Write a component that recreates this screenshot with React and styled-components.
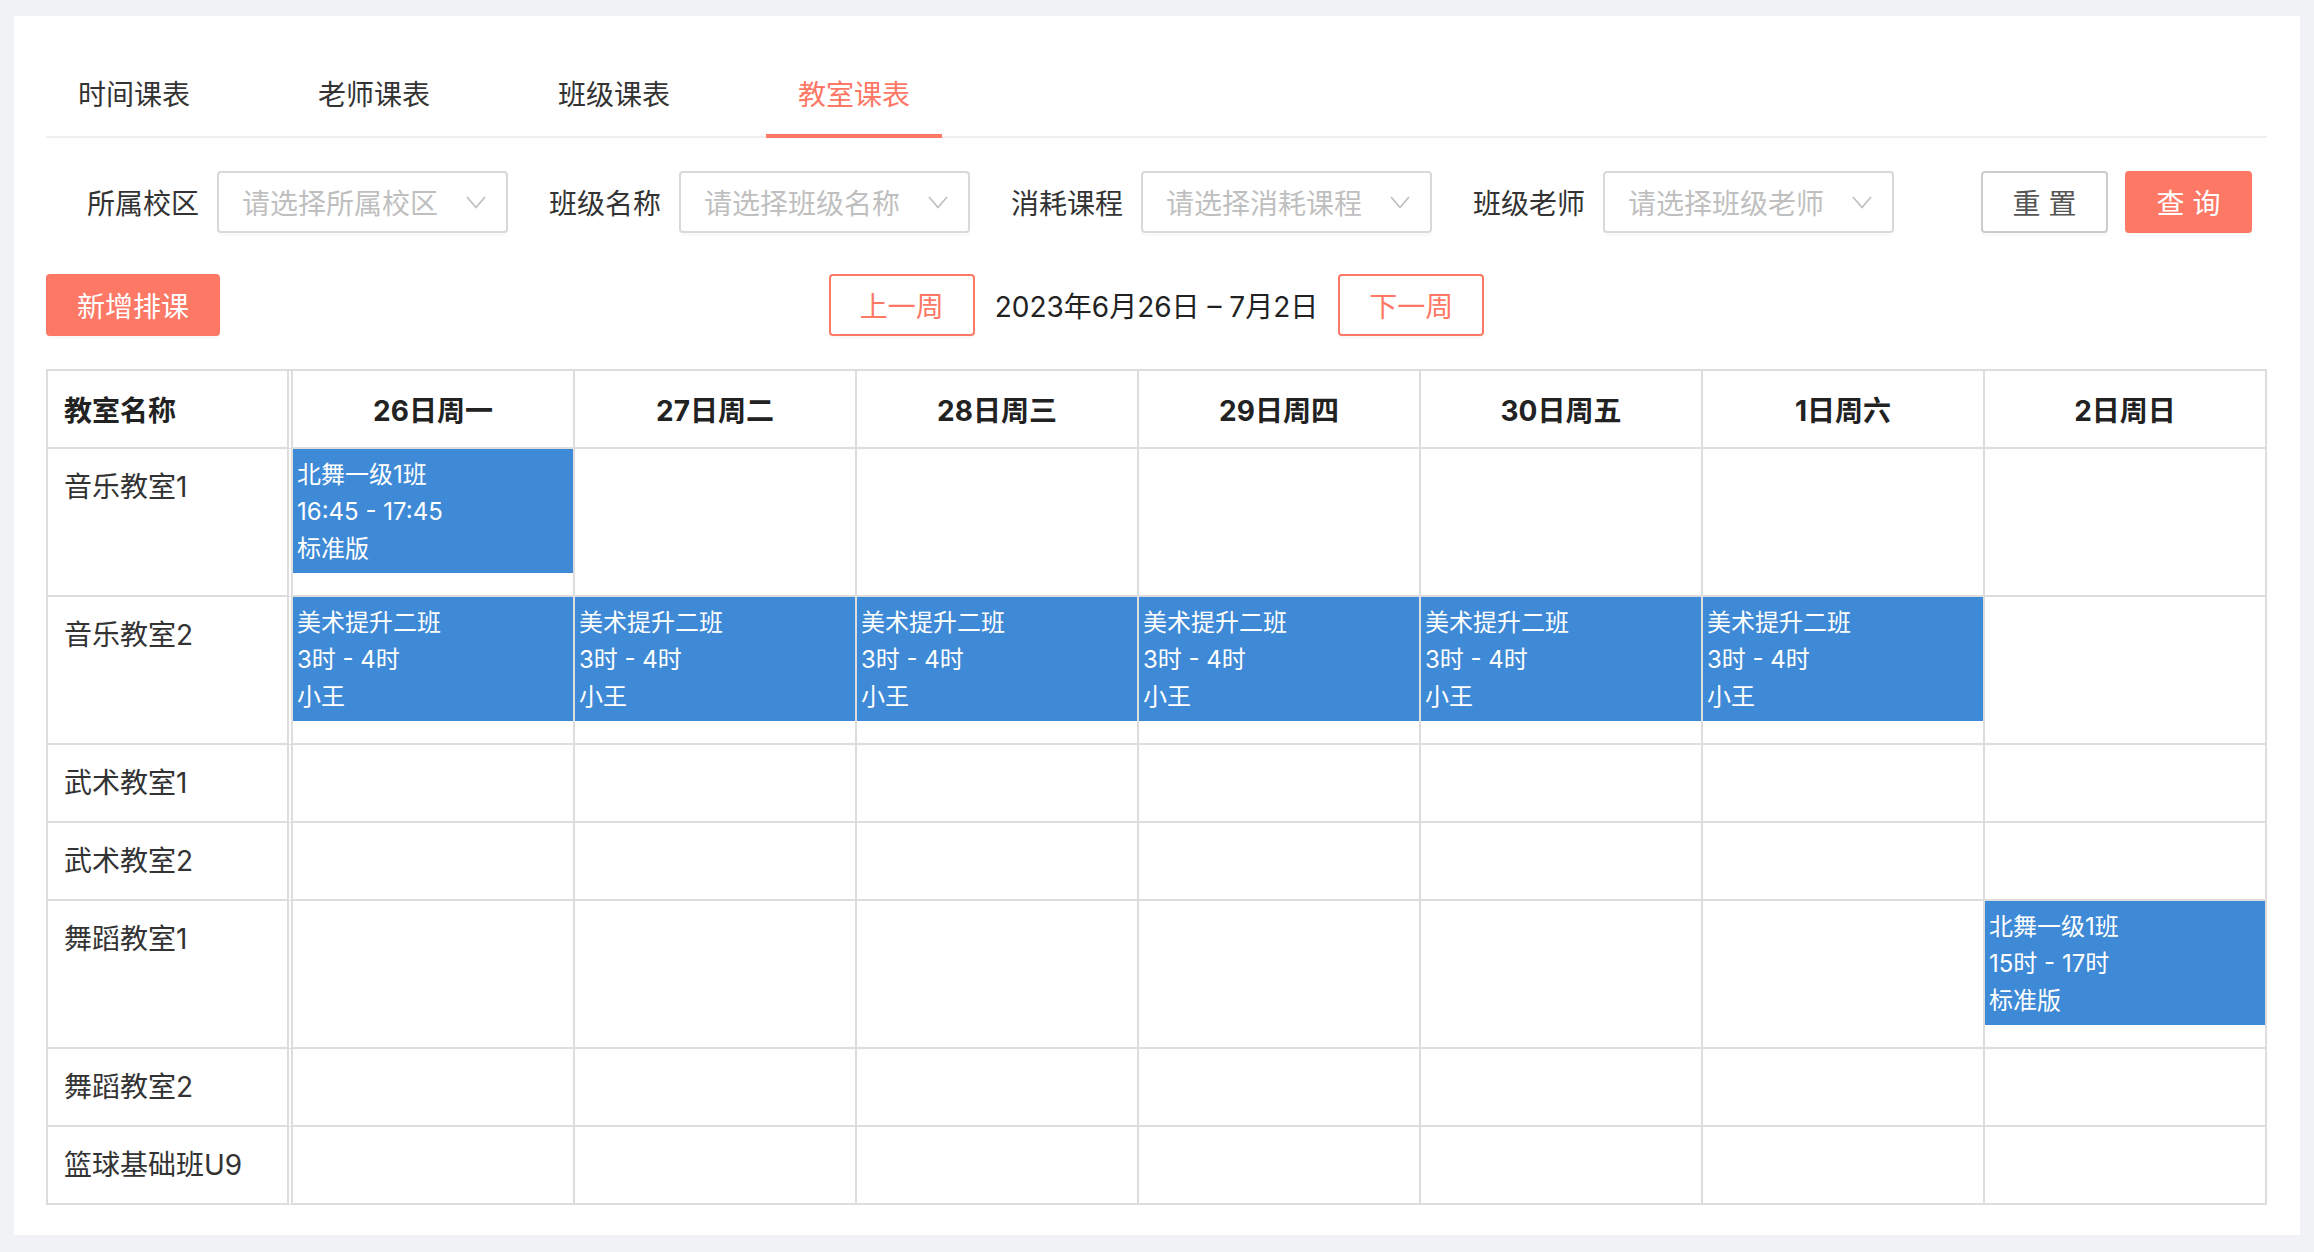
import React from "react";
import styled, { createGlobalStyle } from "styled-components";

const GlobalStyle = createGlobalStyle`
  * {
    box-sizing: border-box;
  }
  body {
    margin: 0;
    background: #f0f2f5;
    font-family: "Inter", "Noto Sans CJK SC", sans-serif;
    color: #333;
  }
`;

const coral = "#fe7866";
const line = "#dddddd";

const Page = styled.div`
  padding: 16px 14px 15px;
`;

const Card = styled.div`
  background: #fff;
  padding: 0 33px 30px 32px;
`;

const TabBar = styled.div`
  display: flex;
  gap: 64px;
  border-bottom: 2px solid #efefef;
`;

const Tab = styled.div`
  padding: 60px 32px 20px;
  line-height: 38px;
  font-size: 28px;
  color: ${({ $active }) => ($active ? coral : "#333")};
  border-bottom: 4px solid ${({ $active }) => ($active ? coral : "transparent")};
  margin-bottom: -2px;
  cursor: pointer;
`;

const FilterBar = styled.div`
  display: flex;
  align-items: center;
  margin-top: 33px;
`;

const Field = styled.div`
  display: flex;
  align-items: center;
`;

const Label = styled.label`
  width: 153px;
  margin-right: 18px;
  text-align: right;
  font-size: 28px;
  color: #333;
`;

const Select = styled.div`
  width: 291px;
  height: 62px;
  border: 2px solid #d9d9d9;
  border-radius: 4px;
  padding: 0 20px 0 23px;
  display: flex;
  align-items: center;
  justify-content: space-between;
  font-size: 28px;
  color: #bfbfbf;
  box-shadow: 0 3px 0 rgba(0, 0, 0, 0.02);
`;

const Actions = styled.div`
  display: flex;
  gap: 17px;
  margin-left: auto;
  margin-right: 15px;
`;

const Button = styled.button`
  height: 62px;
  padding: 0 29px;
  min-width: ${({ $min }) => $min || 0}px;
  border-radius: 4px;
  font-family: inherit;
  font-size: 28px;
  cursor: pointer;
  box-shadow: 0 3px 0 rgba(0, 0, 0, 0.025);
  border: 2px solid
    ${({ $variant }) => ($variant === "default" ? "#cccccc" : coral)};
  background: ${({ $variant }) => ($variant === "primary" ? coral : "#fff")};
  color: ${({ $variant }) =>
    $variant === "primary" ? "#fff" : $variant === "default" ? "#555" : coral};
`;

const Toolbar = styled.div`
  display: grid;
  grid-template-columns: 1fr auto 1fr;
  align-items: center;
  margin-top: 41px;
`;

const ToolbarSide = styled.div`
  display: flex;
  align-items: center;
`;

const WeekNav = styled.div`
  display: flex;
  align-items: center;
  gap: 20px;
`;

const DateText = styled.span`
  font-size: 28px;
  color: #222;
`;

const Grid = styled.div`
  margin-top: 33px;
  display: grid;
  grid-template-columns: 245px repeat(7, 1fr);
  border-top: 2px solid ${line};
  border-left: 2px solid ${line};
`;

const Cell = styled.div`
  border-right: 2px solid ${line};
  border-bottom: 2px solid ${line};
  min-height: 78px;
`;

const HeadCell = styled(Cell)`
  display: flex;
  align-items: center;
  justify-content: ${({ $left }) => ($left ? "flex-start" : "center")};
  padding: 0 16px;
  font-size: 28px;
  font-weight: 700;
  color: #222;
  ${({ $left }) => $left && `border-right: 6px double ${line};`}
`;

const RoomCell = styled(Cell)`
  padding: 24px 16px;
  line-height: 28px;
  font-size: 28px;
  color: #333;
  border-right: 6px double ${line};
  white-space: nowrap;
`;

const DayCell = styled(Cell)`
  padding: 0;
`;

const Lesson = styled.div`
  background: #3e8ad6;
  color: #fff;
  font-size: 24px;
  line-height: 37px;
  padding: 7px 4px 6px;
  margin-bottom: 22px;
`;

const Chevron = () => (
  <svg width="20" height="13" viewBox="0 0 20 13" fill="none">
    <polyline
      points="1,1 10,11.5 19,1"
      stroke="#c0c0c0"
      strokeWidth="1.8"
      strokeLinejoin="round"
    />
  </svg>
);

const tabs = ["时间课表", "老师课表", "班级课表", "教室课表"];

const filters = [
  { label: "所属校区", placeholder: "请选择所属校区" },
  { label: "班级名称", placeholder: "请选择班级名称" },
  { label: "消耗课程", placeholder: "请选择消耗课程" },
  { label: "班级老师", placeholder: "请选择班级老师" },
];

const days = ["26日周一", "27日周二", "28日周三", "29日周四", "30日周五", "1日周六", "2日周日"];

const art = { title: "美术提升二班", time: "3时 - 4时", note: "小王" };

const rooms = [
  { name: "音乐教室1", lessons: { 0: { title: "北舞一级1班", time: "16:45 - 17:45", note: "标准版" } } },
  { name: "音乐教室2", lessons: { 0: art, 1: art, 2: art, 3: art, 4: art, 5: art } },
  { name: "武术教室1", lessons: {} },
  { name: "武术教室2", lessons: {} },
  { name: "舞蹈教室1", lessons: { 6: { title: "北舞一级1班", time: "15时 - 17时", note: "标准版" } } },
  { name: "舞蹈教室2", lessons: {} },
  { name: "篮球基础班U9", lessons: {} },
];

export default function App() {
  return (
    <>
      <GlobalStyle />
      <Page>
        <Card>
          <TabBar>
            {tabs.map((t, i) => (
              <Tab key={t} $active={i === 3}>
                {t}
              </Tab>
            ))}
          </TabBar>

          <FilterBar>
            {filters.map((f) => (
              <Field key={f.label}>
                <Label>{f.label}</Label>
                <Select>
                  <span>{f.placeholder}</span>
                  <Chevron />
                </Select>
              </Field>
            ))}
            <Actions>
              <Button $variant="default" $min={127}>重 置</Button>
              <Button $variant="primary" $min={127}>查 询</Button>
            </Actions>
          </FilterBar>

          <Toolbar>
            <ToolbarSide>
              <Button $variant="primary">新增排课</Button>
            </ToolbarSide>
            <WeekNav>
              <Button $variant="outline">上一周</Button>
              <DateText>2023年6月26日 – 7月2日</DateText>
              <Button $variant="outline">下一周</Button>
            </WeekNav>
            <ToolbarSide />
          </Toolbar>

          <Grid>
            <HeadCell $left>教室名称</HeadCell>
            {days.map((d) => (
              <HeadCell key={d}>{d}</HeadCell>
            ))}
            {rooms.map((room) => (
              <React.Fragment key={room.name}>
                <RoomCell>{room.name}</RoomCell>
                {days.map((d, i) => {
                  const l = room.lessons[i];
                  return (
                    <DayCell key={d}>
                      {l && (
                        <Lesson>
                          <div>{l.title}</div>
                          <div>{l.time}</div>
                          <div>{l.note}</div>
                        </Lesson>
                      )}
                    </DayCell>
                  );
                })}
              </React.Fragment>
            ))}
          </Grid>
        </Card>
      </Page>
    </>
  );
}
